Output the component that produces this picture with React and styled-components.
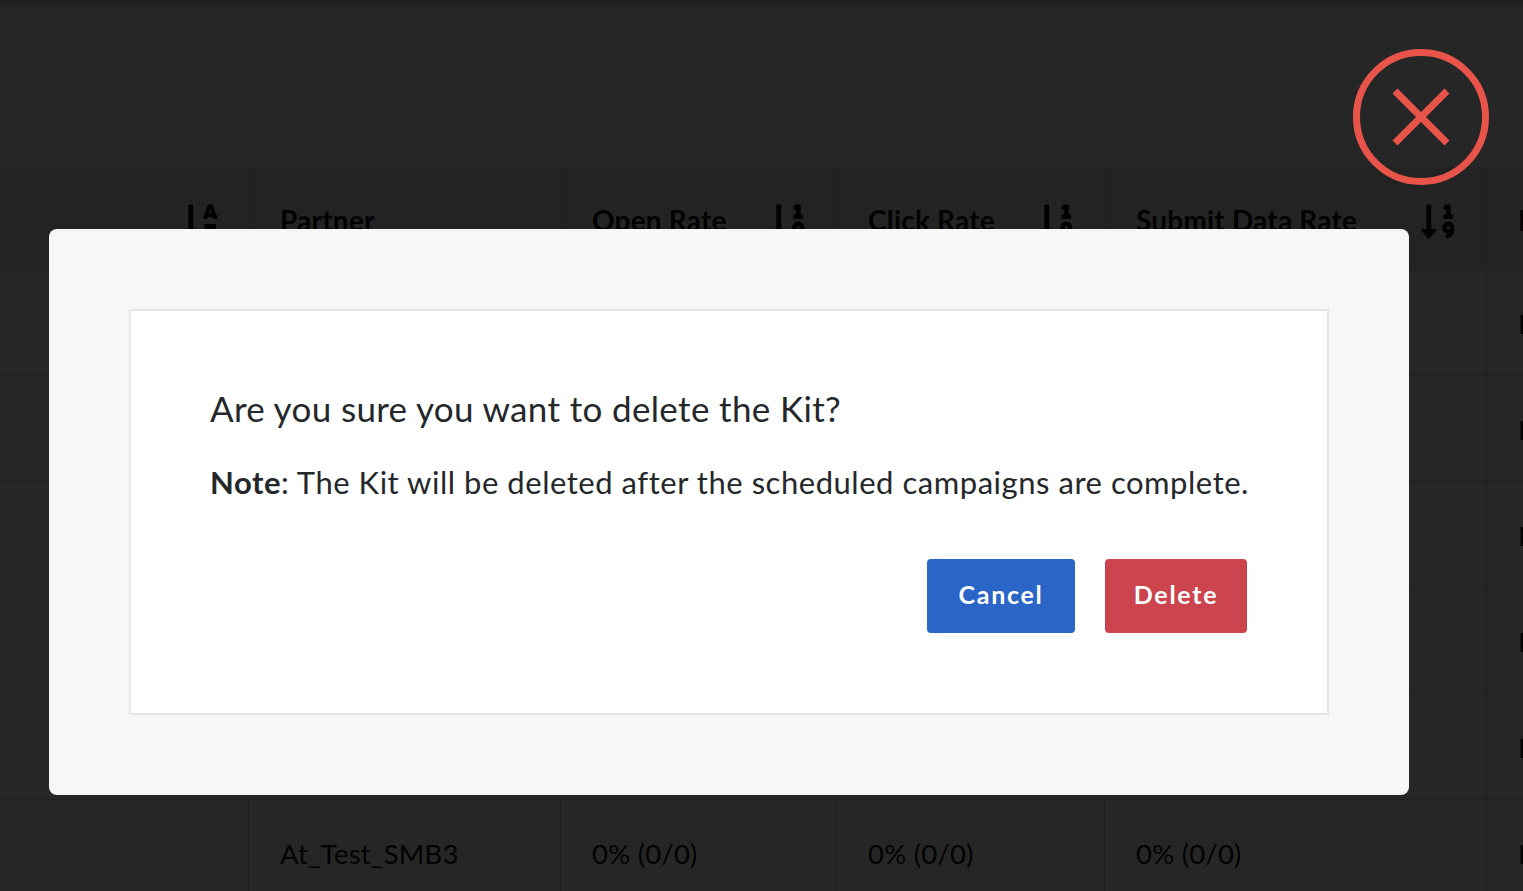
import React from "react";
import styled, { createGlobalStyle } from "styled-components";
import { FaSortAlphaDown, FaSortNumericDown } from "react-icons/fa";

const GlobalStyle = createGlobalStyle`
  html, body {
    margin: 0;
    height: 100%;
    overflow: hidden;
    background: #fff;
    font-family: "Lato", "Open Sans", sans-serif;
  }
  * {
    box-sizing: border-box;
  }
`;

const Page = styled.div`
  height: 100vh;
  overflow: hidden;
  background: #fff;
`;

const TopStrip = styled.div`
  height: 7px;
  background: #dcdcdc;
`;

const Spacer = styled.div`
  height: 160px;
`;

const Table = styled.div`
  display: grid;
  grid-template-columns: 249px 312px 276px 268px 382px 1fr;
  grid-template-rows: 103px;
  grid-auto-rows: 106px;
`;

const Cell = styled.div`
  display: flex;
  align-items: center;
  justify-content: space-between;
  padding: 2px 31px 0;
  min-width: 0;
  white-space: nowrap;
  overflow: hidden;
  color: #111;
  font-size: 27.5px;
  letter-spacing: 0.2px;
  border-bottom: 1px solid #d0d0d0;
  border-right: ${(p) => (p.$last ? "none" : "1px solid #d0d0d0")};
`;

const HeadCell = styled(Cell)`
  background: #eaeaea;
  font-size: 28px;
  font-weight: 700;
  padding-top: 4px;
  justify-content: ${(p) => (p.$end ? "flex-end" : "space-between")};
  svg {
    flex: none;
    font-size: 39px;
    margin: 2px -3px 0 0;
    color: #0c0c0c;
  }
`;

const Overlay = styled.div`
  position: fixed;
  inset: 0;
  display: flex;
  align-items: flex-start;
  padding: 229px 0 0 49px;
  background: rgba(0, 0, 0, 0.85);
`;

const Modal = styled.div`
  width: 1360px;
  height: 566px;
  padding: 80px;
  background: #f7f7f7;
  border-radius: 8px;
`;

const Panel = styled.div`
  height: 406px;
  padding: 78px 80px 80px 79px;
  background: #fff;
  border: 2px solid #e6e6e6;
`;

const Question = styled.h2`
  margin: 0;
  color: #25282b;
  font-size: 35px;
  font-weight: 400;
  line-height: 38px;
  letter-spacing: 0.35px;
`;

const Note = styled.p`
  margin: 37px 0 0;
  color: #25282b;
  font-size: 31px;
  line-height: 36px;
  letter-spacing: 0.53px;
  white-space: nowrap;
  b {
    font-weight: 700;
  }
`;

const Actions = styled.div`
  display: flex;
  justify-content: flex-end;
  gap: 30px;
  margin-top: 59px;
`;

const Button = styled.button`
  height: 74px;
  width: ${(p) => p.$width}px;
  padding: 0 0 5px;
  border: 0;
  border-radius: 4px;
  background: ${(p) => p.$color};
  color: #fff;
  font-family: inherit;
  font-size: 25px;
  font-weight: 700;
  letter-spacing: 1.7px;
`;

const CloseButton = styled.button`
  position: absolute;
  top: 49px;
  right: 34px;
  width: 136px;
  height: 136px;
  padding: 0;
  border: 0;
  background: none;
  svg {
    display: block;
  }
`;

const columns = [
  { label: "", icon: <FaSortAlphaDown />, end: true },
  { label: "Partner" },
  { label: "Open Rate", icon: <FaSortNumericDown /> },
  { label: "Click Rate", icon: <FaSortNumericDown /> },
  { label: "Submit Data Rate", icon: <FaSortNumericDown /> },
  { label: "N", last: true },
];

const rows = [
  ["", "", "", "", "", "N"],
  ["", "", "", "", "", "N"],
  ["", "", "", "", "", "N"],
  ["", "", "", "", "", "N"],
  ["", "", "", "", "", "N"],
  ["", "At_Test_SMB3", "0% (0/0)", "0% (0/0)", "0% (0/0)", "N"],
];

export default function App() {
  return (
    <Page>
      <GlobalStyle />
      <TopStrip />
      <Spacer />
      <Table>
        {columns.map((col, i) => (
          <HeadCell key={i} $end={col.end} $last={col.last}>
            {col.label && <span>{col.label}</span>}
            {col.icon}
          </HeadCell>
        ))}
        {rows.map((row, r) =>
          row.map((text, c) => (
            <Cell key={`${r}-${c}`} $last={c === 5}>
              {text}
            </Cell>
          ))
        )}
      </Table>
      <Overlay>
        <Modal>
          <Panel>
            <Question>Are you sure you want to delete the Kit?</Question>
            <Note>
              <b>Note</b>: The Kit will be deleted after the scheduled campaigns are complete.
            </Note>
            <Actions>
              <Button $width={148} $color="#2a65c7">Cancel</Button>
              <Button $width={142} $color="#cc444d">Delete</Button>
            </Actions>
          </Panel>
        </Modal>
        <CloseButton aria-label="Close">
          <svg width="136" height="136" viewBox="0 0 136 136" fill="none" stroke="#e8544a" strokeWidth="7">
            <circle cx="68" cy="68" r="64.5" />
            <path d="M42 42 L94 94 M94 42 L42 94" />
          </svg>
        </CloseButton>
      </Overlay>
    </Page>
  );
}
